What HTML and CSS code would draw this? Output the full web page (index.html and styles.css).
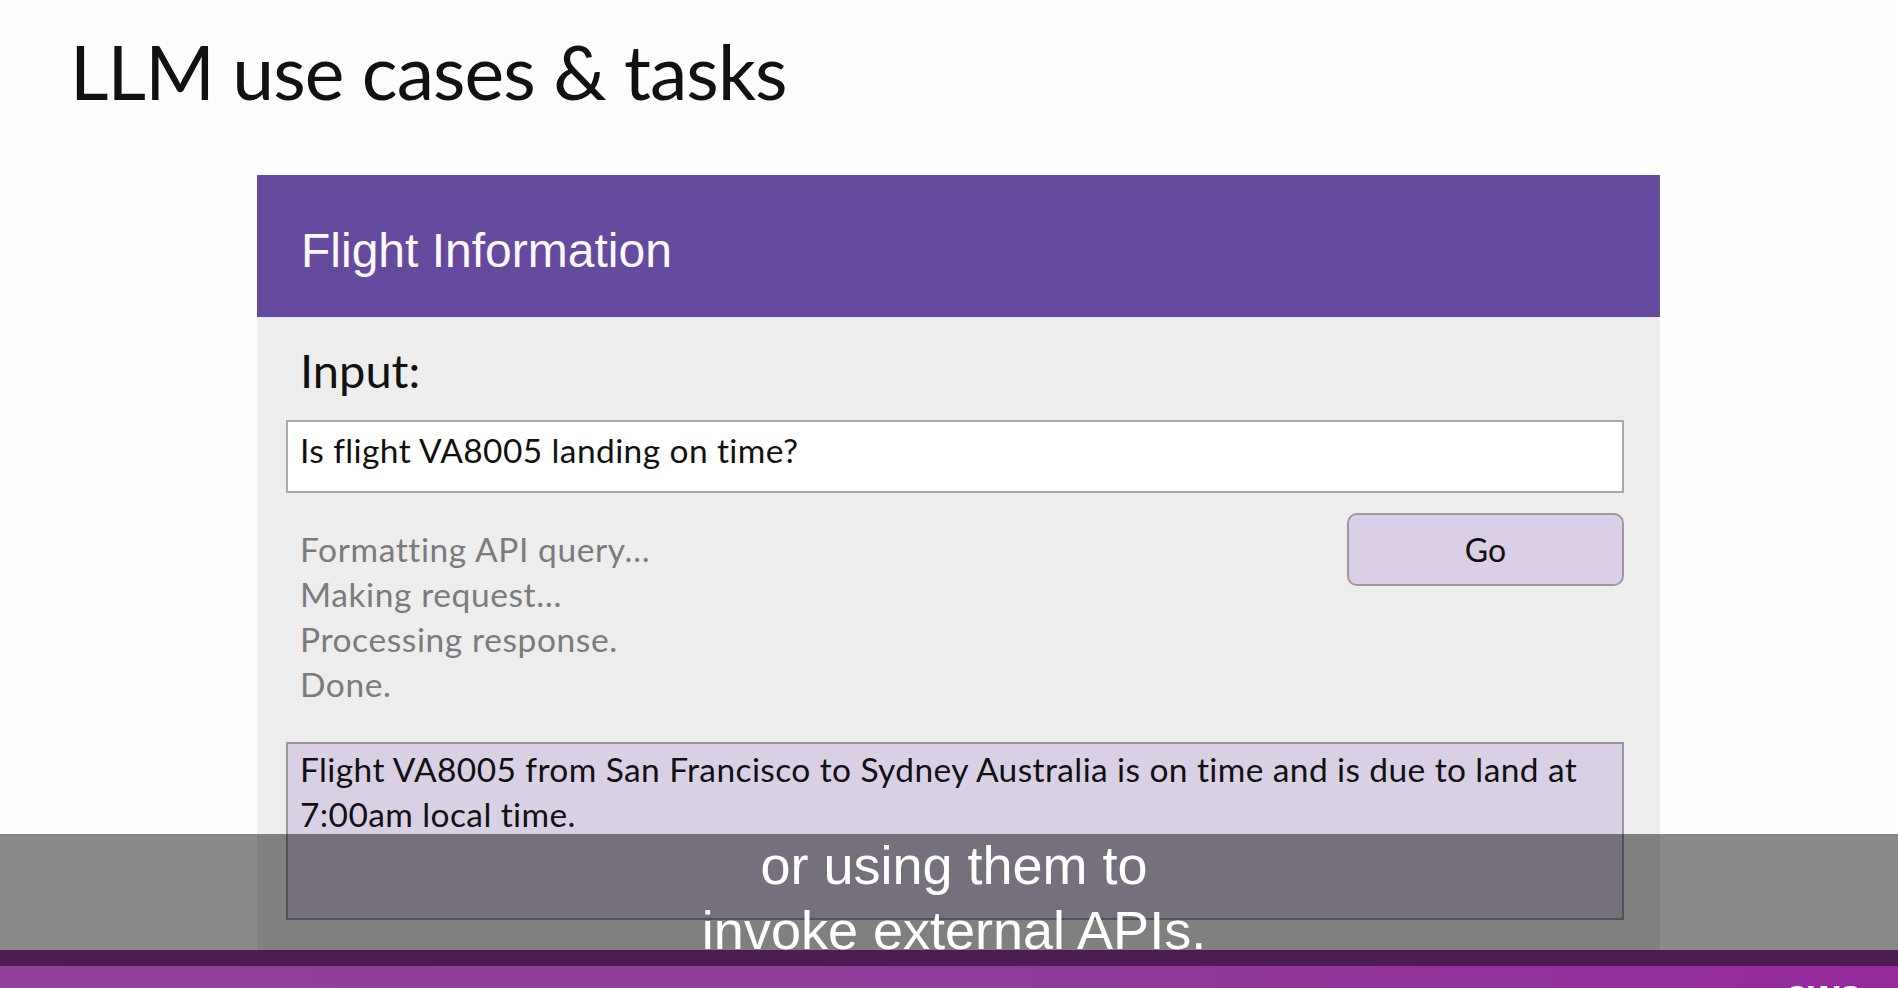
FILE: index.html
```html
<!DOCTYPE html>
<html lang="en">
<head>
<meta charset="utf-8">
<title>LLM use cases &amp; tasks</title>
<link rel="stylesheet" href="styles.css">
</head>
<body>
<div class="page">
  <header class="slide-head">
    <h1 class="slide-title">LLM use cases &amp; tasks</h1>
  </header>
  <main class="panel">
    <div class="panel-head">
      <h2 class="panel-title">Flight Information</h2>
    </div>
    <div class="panel-body">
      <div class="input-label">Input:</div>
      <div class="input-box">Is flight VA8005 landing on time?</div>
      <div class="action-row">
        <div class="status">
          <div>Formatting API query…</div>
          <div>Making request…</div>
          <div>Processing response.</div>
          <div>Done.</div>
        </div>
        <div class="go-btn">Go</div>
      </div>
      <div class="output-box">Flight VA8005 from San Francisco to Sydney Australia is on time and is due to land at 7:00am local time.</div>
    </div>
  </main>
  <footer class="slide-foot">
    <div class="foot-dark"></div>
    <div class="foot-bar"><span class="aws">aws</span></div>
  </footer>
  <div class="caption">
    <div>or using them to</div>
    <div>invoke external APIs.</div>
  </div>
</div>
</body>
</html>
```
FILE: styles.css
```css
html, body {
  margin: 0;
  padding: 0;
}
body {
  background: #fdfdfd;
  overflow: hidden;
}
.page {
  position: relative;
  width: 1898px;
  height: 988px;
  display: flex;
  flex-direction: column;
  overflow: hidden;
}
.slide-head {
  height: 175px;
  flex: none;
  box-sizing: border-box;
  padding: 26px 0 0 70px;
}
.slide-title {
  margin: 0;
  font-family: Lato, "Liberation Sans", sans-serif;
  font-weight: 400;
  font-size: 75px;
  line-height: 90px;
  color: #111;
  letter-spacing: -0.9px;
}
.panel {
  flex: none;
  margin-left: 257px;
  width: 1403px;
  height: 775px;
  display: flex;
  flex-direction: column;
}
.panel-head {
  height: 142px;
  flex: none;
  box-sizing: border-box;
  background: #654a9e;
  padding: 49px 0 0 44px;
}
.panel-title {
  margin: 0;
  font-family: "Liberation Sans", Arial, sans-serif;
  font-weight: 400;
  font-size: 48px;
  line-height: 54px;
  color: #fbf8ff;
}
.panel-body {
  flex: 1;
  background: #ededed;
  padding: 24px 36px 0 29px;
  font-family: Lato, "Liberation Sans", sans-serif;
}
.input-label {
  font-size: 47px;
  line-height: 59px;
  color: #111;
  padding-left: 14px;
  margin-bottom: 20px;
}
.input-box {
  height: 73px;
  box-sizing: border-box;
  border: 2px solid #a9a9a9;
  background: #fff;
  font-size: 33.5px;
  letter-spacing: 0.4px;
  line-height: 45px;
  padding: 6px 0 0 12px;
  color: #111;
}
.action-row {
  display: flex;
  justify-content: space-between;
  align-items: flex-start;
  margin-top: 20px;
}
.status {
  padding: 14px 0 0 14px;
  font-size: 33.5px;
  letter-spacing: 0.6px;
  line-height: 45px;
  color: #7b7b7b;
}
.go-btn {
  width: 277px;
  height: 73px;
  box-sizing: border-box;
  border: 2px solid #9d99a3;
  border-radius: 10px;
  background: #dacfe6;
  display: flex;
  align-items: center;
  justify-content: center;
  font-size: 32px;
  color: #111;
}
.output-box {
  margin-top: 35px;
  height: 178px;
  box-sizing: border-box;
  border: 2px solid #9a97a0;
  background: #d9d0e6;
  padding: 3px 20px 0 12px;
  font-size: 33.5px;
  letter-spacing: 0.4px;
  line-height: 45px;
  color: #111;
}
.slide-foot {
  flex: none;
  height: 38px;
  display: flex;
  flex-direction: column;
  position: relative;
  z-index: 2;
}
.foot-dark {
  height: 16px;
  background: #4e1b54;
}
.foot-bar {
  flex: 1;
  background: linear-gradient(90deg, #8f4297 0%, #8e3e98 50%, #942a9c 100%);
  position: relative;
  overflow: hidden;
}
.aws {
  position: absolute;
  left: 1786px;
  top: 8px;
  font-family: "Liberation Sans", Arial, sans-serif;
  font-weight: 700;
  font-size: 40px;
  line-height: 40px;
  color: #fff;
}
.caption {
  position: absolute;
  left: 0;
  top: 834px;
  width: 100%;
  height: 116px;
  background: rgba(0, 0, 0, 0.46);
  overflow: hidden;
  text-align: center;
  font-family: "Liberation Sans", Arial, sans-serif;
  font-size: 54px;
  line-height: 65px;
  color: #fff;
  box-sizing: border-box;
  padding-left: 10px;
}
.caption div:first-child {
  margin-top: -1px;
}
```
